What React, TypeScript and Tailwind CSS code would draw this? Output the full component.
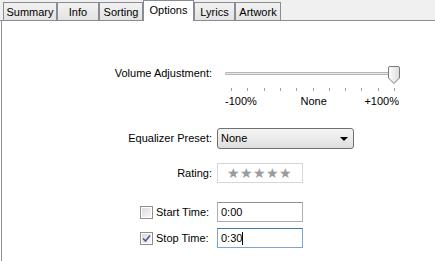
import { useState } from "react";

const tabs = [
  { name: "Summary", w: "w-[54px]" },
  { name: "Info", w: "w-[42px]" },
  { name: "Sorting", w: "w-[44px]" },
  { name: "Options", w: "w-[51px]" },
  { name: "Lyrics", w: "w-[41px]" },
  { name: "Artwork", w: "w-[46px]" },
];

function Checkbox({ checked }: { checked: boolean }) {
  return (
    <div className="w-[13px] h-[13px] border border-[#8f8f8f] bg-white p-px shrink-0">
      <div className="w-full h-full bg-gradient-to-br from-[#dcdcdc] to-[#f8f8f8] flex items-center justify-center">
        {checked && (
          <svg width="9" height="9" viewBox="0 0 9 9">
            <path d="M1 4.5 L3.5 7 L8 1.5" stroke="#4b5a8e" strokeWidth="1.6" fill="none" />
          </svg>
        )}
      </div>
    </div>
  );
}

function Slider() {
  const ticks = Array.from({ length: 11 }, (_, i) => i);
  return (
    <div className="relative w-[185px] h-[40px]">
      {/* track */}
      <div className="absolute left-[8px] top-[6px] w-[171px] h-[3px] border border-[#b5b5b5] bg-[#e8e8e8] rounded-[1px]" />
      {/* thumb */}
      <svg className="absolute left-[171px] top-[0px]" width="12" height="18" viewBox="0 0 12 18">
        <defs>
          <linearGradient id="th" x1="0" x2="1" y1="0" y2="0">
            <stop offset="0" stopColor="#fdfdfd" />
            <stop offset="1" stopColor="#dcdcdc" />
          </linearGradient>
        </defs>
        <path d="M0.5 2 Q0.5 0.5 2 0.5 L10 0.5 Q11.5 0.5 11.5 2 L11.5 12 L6 17.5 L0.5 12 Z" fill="url(#th)" stroke="#7a7a7a" />
      </svg>
      {/* ticks */}
      {ticks.map(i => (
        <div key={i} className="absolute top-[22px] w-px h-[3px] bg-[#a0a0a0]" style={{ left: 14 + i * 16.3 }} />
      ))}
      <div className="absolute top-[28px] left-[8px] right-0 flex justify-between pr-[3px] leading-[14px]">
        <span>-100%</span>
        <span className="ml-[6px]">None</span>
        <span>+100%</span>
      </div>
    </div>
  );
}

export default function App() {
  const [active] = useState("Options");

  return (
    <div className="w-[435px] h-[261px] bg-white flex flex-col overflow-hidden text-[11px] text-black font-['Liberation_Sans',Arial,sans-serif]">
      {/* Tab strip */}
      <div className="h-[21px] bg-[#f0f0f0] border-b border-[#898c95] flex items-end pl-[3px] shrink-0">
        {tabs.map(t =>
          t.name === active ? (
            <div key={t.name}
              className={`${t.w} h-[21px] -mb-px bg-white border border-b-0 border-[#898c95] flex items-start justify-center pt-[2px] leading-[14px] z-10`}>
              {t.name}
            </div>
          ) : (
            <div key={t.name}
              className={`${t.w} h-[18px] bg-gradient-to-b from-[#f2f2f2] to-[#e3e3e3] border border-b-0 border-[#898c95] flex items-center justify-center leading-[14px]`}>
              {t.name}
            </div>
          )
        )}
      </div>

      {/* Panel */}
      <div className="flex-1 ml-px border-l border-[#898c95] flex flex-col">
        {/* Volume */}
        <div className="flex items-start mt-[45px]">
          <div className="w-[210px] text-right leading-[14px]">Volume Adjustment:</div>
          <div className="ml-[5px]"><Slider /></div>
        </div>

        {/* Equalizer */}
        <div className="flex items-center mt-[22px]">
          <div className="w-[210px] text-right">Equalizer Preset:</div>
          <div className="ml-[5px] w-[137px] h-[21px] border border-[#707070] rounded-[3px] bg-gradient-to-b from-[#f4f4f4] via-[#ebebeb] to-[#dddddd] flex items-center pl-[3px] pr-[5px]">
            <span className="flex-1">None</span>
            <svg width="8" height="4" viewBox="0 0 8 4"><path d="M0 0 L8 0 L4 4 Z" fill="#000" /></svg>
          </div>
        </div>

        {/* Rating */}
        <div className="flex items-center mt-[14px]">
          <div className="w-[210px] text-right">Rating:</div>
          <div className="ml-[5px] w-[86px] h-[20px] border border-[#d6d6d6] bg-white flex items-center pl-[9px] text-[14px] text-[#9b9b9b] leading-none">
            ★★★★★
          </div>
        </div>

        {/* Start time */}
        <div className="flex items-center mt-[19px]">
          <div className="w-[210px] flex items-center pl-[138px] gap-[3px]">
            <Checkbox checked={false} />
            <span>Start Time:</span>
          </div>
          <div className="ml-[5px] w-[86px] h-[20px] border border-[#abadb3] border-t-[#8e8f8f] bg-white flex items-center pl-[3px]">0:00</div>
        </div>

        {/* Stop time */}
        <div className="flex items-center mt-[6px]">
          <div className="w-[210px] flex items-center pl-[138px] gap-[3px]">
            <Checkbox checked />
            <span>Stop Time:</span>
          </div>
          <div className="ml-[5px] w-[86px] h-[20px] border border-[#7ea4d3] border-t-[#3d7bad] bg-white flex items-center pl-[3px]">
            0:30<span className="w-px h-[13px] bg-black" />
          </div>
        </div>
      </div>
    </div>
  );
}
